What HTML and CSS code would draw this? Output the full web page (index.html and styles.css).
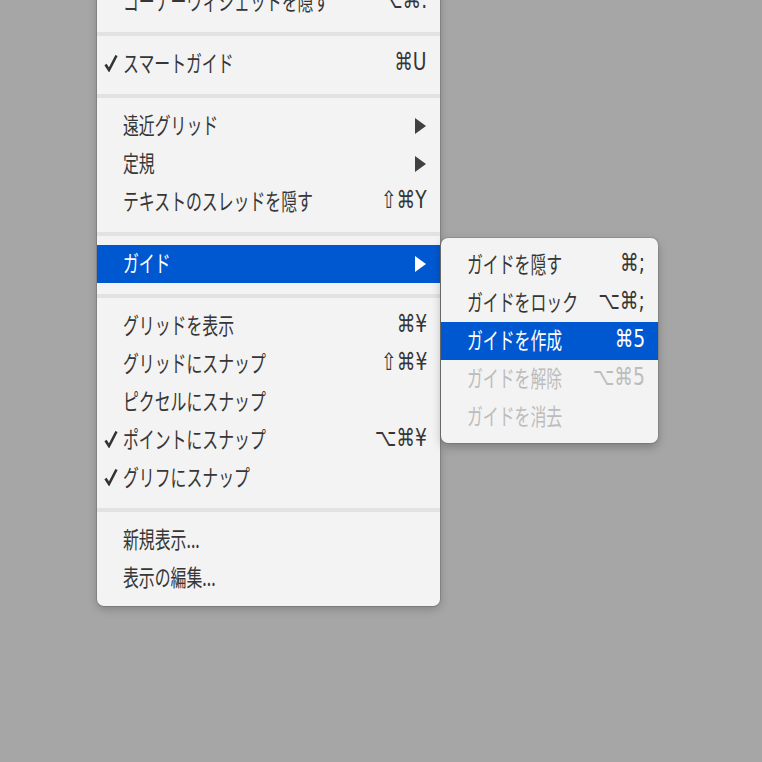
FILE: index.html
```html
<!DOCTYPE html>
<html lang="ja">
<head>
<meta charset="utf-8">
<link rel="stylesheet" href="styles.css">
</head>
<body>
<div class="stage">
  <div class="menu main">
    <div class="row"><span class="check"></span><span class="lbl">コーナーウィジェットを隠す</span><span class="key">⌥⌘.</span></div>
    <div class="sep"></div>
    <div class="row"><span class="check"><svg viewBox="0 0 14 18" width="14" height="18"><path d="M1.5 10.5 L5 16 L12.5 1.5" fill="none" stroke="#333" stroke-width="2.6" stroke-linejoin="miter"/></svg></span><span class="lbl">スマートガイド</span><span class="key">⌘U</span></div>
    <div class="sep"></div>
    <div class="row"><span class="check"></span><span class="lbl">遠近グリッド</span><span class="arrow"><svg viewBox="0 0 11 16" width="11" height="16"><polygon points="0,0 11,8 0,16" fill="#404040"/></svg></span></div>
    <div class="row"><span class="check"></span><span class="lbl">定規</span><span class="arrow"><svg viewBox="0 0 11 16" width="11" height="16"><polygon points="0,0 11,8 0,16" fill="#404040"/></svg></span></div>
    <div class="row"><span class="check"></span><span class="lbl">テキストのスレッドを隠す</span><span class="key">⇧⌘Y</span></div>
    <div class="sep"></div>
    <div class="row active"><span class="check"></span><span class="lbl">ガイド</span><span class="arrow"><svg viewBox="0 0 11 16" width="11" height="16"><polygon points="0,0 11,8 0,16" fill="#ffffff"/></svg></span></div>
    <div class="sep"></div>
    <div class="row"><span class="check"></span><span class="lbl">グリッドを表示</span><span class="key">⌘¥</span></div>
    <div class="row"><span class="check"></span><span class="lbl">グリッドにスナップ</span><span class="key">⇧⌘¥</span></div>
    <div class="row"><span class="check"></span><span class="lbl">ピクセルにスナップ</span></div>
    <div class="row"><span class="check"><svg viewBox="0 0 14 18" width="14" height="18"><path d="M1.5 10.5 L5 16 L12.5 1.5" fill="none" stroke="#333" stroke-width="2.6"/></svg></span><span class="lbl">ポイントにスナップ</span><span class="key">⌥⌘¥</span></div>
    <div class="row"><span class="check"><svg viewBox="0 0 14 18" width="14" height="18"><path d="M1.5 10.5 L5 16 L12.5 1.5" fill="none" stroke="#333" stroke-width="2.6"/></svg></span><span class="lbl">グリフにスナップ</span></div>
    <div class="sep"></div>
    <div class="row"><span class="check"></span><span class="lbl">新規表示...</span></div>
    <div class="row"><span class="check"></span><span class="lbl">表示の編集...</span></div>
  </div>

  <div class="menu sub">
    <div class="row"><span class="lbl">ガイドを隠す</span><span class="key">⌘;</span></div>
    <div class="row"><span class="lbl">ガイドをロック</span><span class="key">⌥⌘;</span></div>
    <div class="row active"><span class="lbl">ガイドを作成</span><span class="key">⌘5</span></div>
    <div class="row disabled"><span class="lbl">ガイドを解除</span><span class="key">⌥⌘5</span></div>
    <div class="row disabled"><span class="lbl">ガイドを消去</span></div>
  </div>
</div>
</body>
</html>
```

FILE: styles.css
```css
html, body {
  margin: 0;
  padding: 0;
  background: #a6a6a6;
  width: 762px;
  height: 762px;
  overflow: hidden;
}

.stage {
  position: relative;
  display: flow-root;
  padding-left: 97px;
  font-family: "Noto Sans CJK JP", "Noto Sans", sans-serif;
  color: #363636;
}

.menu {
  background: #f3f3f3;
  box-sizing: border-box;
}

.main {
  width: 343px;
  margin-top: -25px;
  padding: 8px 0 9px;
  border-radius: 7px;
  box-shadow: 0 0 0 1px rgba(0,0,0,0.12), 0 3px 10px rgba(0,0,0,0.22);
}

.sub {
  position: absolute;
  left: 441px;
  top: 238px;
  width: 217px;
  padding: 8px 0 7px;
  border-radius: 7px;
  box-shadow: 0 0 0 1px rgba(0,0,0,0.1), 0 4px 10px rgba(0,0,0,0.25);
}

.row {
  height: 38px;
  display: flex;
  align-items: center;
  padding: 0 13px 0 7px;
  position: relative;
}

.sub .row {
  padding-left: 26px;
}

.check {
  width: 19px;
  flex: none;
  display: flex;
  align-items: center;
  margin-top: -2px;
}

.lbl {
  flex: 1;
  min-width: 0;
  font-size: 23px;
  white-space: nowrap;
  transform: translateY(-2px) scaleX(0.69);
  transform-origin: left center;
  line-height: 38px;
}

.key {
  flex: none;
  font-family: "DejaVu Sans", sans-serif;
  font-size: 24px;
  white-space: nowrap;
  transform: translateY(-2px) scaleX(0.78);
  transform-origin: right center;
  line-height: 38px;
}

.arrow {
  flex: none;
  display: flex;
  align-items: center;
  margin-right: 1px;
}

.sep {
  height: 4px;
  margin: 11px 0 9px;
  background: #e2e2e2;
}

.active {
  background: #0058d1;
  color: #ffffff;
}

.disabled {
  color: #bcbcbc;
}
```
